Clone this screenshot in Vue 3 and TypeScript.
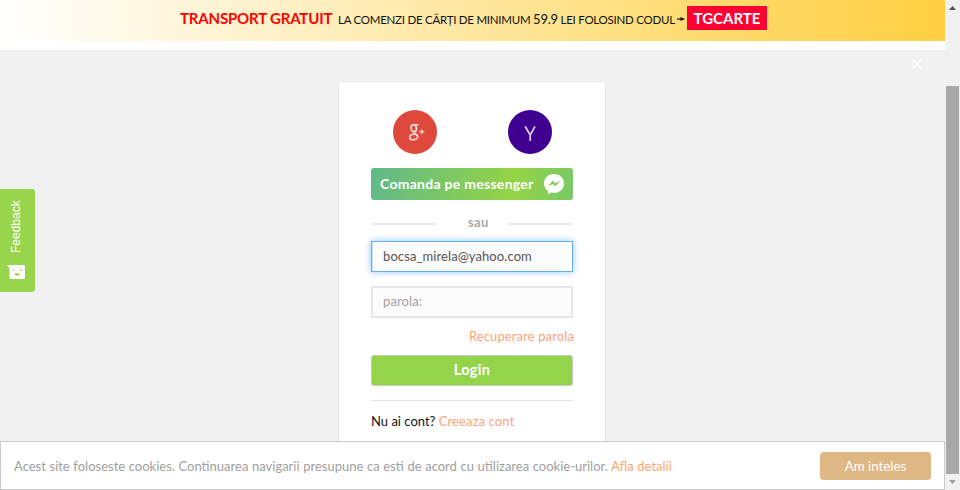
<script setup lang="ts">
import { ref } from 'vue'

const email = ref('bocsa_mirela@yahoo.com')
const password = ref('')
</script>

<template>
  <div class="window">
    <div class="page">
      <header class="promo">
        <strong class="promo-title">TRANSPORT GRATUIT</strong>
        <span class="promo-text">LA COMENZI DE CĂRȚI DE MINIMUM <span class="price">59.9</span> LEI FOLOSIND CODUL</span>
        <svg class="arrow" viewBox="0 0 8 8"><path d="M0 4H5" stroke="#111" stroke-width="1.2" /><path d="M3.500 2L8 4L3.500 6Z" fill="#111" /></svg>
        <span class="code"><span>TGCARTE</span></span>
      </header>

      <main class="content">
        <form class="card" @submit.prevent>
          <div class="socials">
            <a class="social google">
              <svg viewBox="0 0 44 44" fill="none" stroke="#f8dad6">
                <ellipse cx="20.700" cy="18.200" rx="2.700" ry="3.500" transform="rotate(-14 20.700 18.200)" stroke-width="1.700" />
                <path d="M20.500 14.800H25.600M22.500 21.300C19.500 22.700 21.500 23.200 23.500 24.700C24.300 25.300 24.700 26 24.600 26.800" stroke-width="1.500" />
                <ellipse cx="20.700" cy="27" rx="4" ry="2.700" transform="rotate(-8 20.700 27)" stroke-width="1.500" />
                <path d="M26.200 21.700H31.200M28.700 19.200V24.200" stroke-width="1.300" />
              </svg>
            </a>
            <a class="social yahoo">
              <svg viewBox="0 0 44 44" fill="none" stroke="#ddd0ee" stroke-width="1.700">
                <path d="M17.600 17.200L22.200 25L26.600 17.200M22.200 24.500V31M16.800 17.200H18.500M25.700 17.200H27.400" />
              </svg>
            </a>
          </div>

          <button class="messenger" type="button">
            <span>Comanda pe messenger</span>
            <svg viewBox="0 0 20 20">
              <path d="M10 0C4.300 0 0 4 0 9.300C0 12.500 1.500 15.200 4 17L4.100 20L7 18.400C8 18.700 9 18.800 10 18.800C15.800 18.800 20 14.700 20 9.400C20 4 15.700 0 10 0Z" fill="#fff" />
              <path d="M3.900 12.300L8.700 6.800L11.400 9.200L16.200 6.800L11.600 12.200L8.700 9.900Z" fill="#83ca60" />
            </svg>
          </button>

          <div class="divider"><i></i><span>sau</span><i></i></div>

          <input v-model="email" class="field active" type="text" />
          <input v-model="password" class="field" type="password" placeholder="parola:" />
          <a class="recover"><span>Recuperare parola</span></a>
          <button class="login" type="submit">Login</button>
          <p class="signup"><span>Nu ai cont?</span> <a>Creeaza cont</a></p>
        </form>
      </main>

      <svg class="close" viewBox="0 0 10 10"><path d="M.5 .5L9.500 9.500M9.500 .5L.5 9.500" stroke="#fff" stroke-width="1.500" /></svg>

      <aside class="feedback">
        <span>Feedback</span>
        <svg viewBox="0 0 18 14">
          <path d="M0 0H16.500Q18 0 18 1.500V12.500Q18 14 16.500 14H4Q2.500 14 2.500 12.500V3.500Z" fill="#fff" />
          <path d="M6 4.500H7.500V6H6ZM13 4.500H14.500V6H13ZM7.500 8.200H13Q12.500 10.800 10.300 10.800Q8 10.800 7.500 8.200Z" fill="#98d54c" />
        </svg>
      </aside>

      <footer class="cookies">
        <p><span>Acest site foloseste cookies. Continuarea navigarii presupune ca esti de acord cu utilizarea cookie-urilor.</span> <a>Afla detalii</a></p>
        <button type="button">Am inteles</button>
      </footer>
    </div>

    <div class="scrollbar">
      <svg viewBox="0 0 7 4"><path d="M0 4L3.500 0L7 4Z" fill="#505050" /></svg>
      <div class="thumb"></div>
      <svg viewBox="0 0 7 4"><path d="M0 0H7L3.500 4Z" fill="#a0a0a0" /></svg>
    </div>
  </div>
</template>

<style>
body {
  overflow: hidden;
}
</style>

<style scoped>
* {
  box-sizing: border-box;
}
.window {
  display: grid;
  grid-template-columns: 945px 15px;
  height: 490px;
  font-family: Lato, "Open Sans", sans-serif;
  white-space: nowrap;
}
.page {
  position: relative;
  display: flex;
  flex-direction: column;
  height: 490px;
  overflow: hidden;
  background: #fff;
}
.promo {
  display: flex;
  align-items: center;
  height: 41px;
  padding: 0 0 5px 180px;
  background: linear-gradient(90deg, #fff 0%, #ffcf40 100%);
  color: #111;
}
.promo-title {
  width: 158px;
  color: #f00;
  font-size: 15px;
  letter-spacing: -0.18px;
}
.promo-text {
  width: 339px;
  padding-top: 1px;
  font-size: 11.5px;
  letter-spacing: -0.25px;
}
.price {
  font-size: 13px;
}
.arrow {
  width: 8px;
  height: 8px;
  margin-top: 1px;
}
.code {
  display: flex;
  align-items: center;
  justify-content: center;
  width: 80px;
  height: 24px;
  margin-left: 2px;
  background: #ff0032;
  color: #fff;
  font-size: 15px;
  font-weight: 700;
}
.content {
  flex: 1;
  margin-top: 9px;
  padding-top: 31px;
  background: #f1f1f1;
}
.card {
  display: flex;
  flex-direction: column;
  width: 268px;
  height: 400px;
  margin-left: 338px;
  padding: 28px 32px 0;
  border: 1px solid #e7e7e7;
  border-radius: 3px;
  background: #fff;
}
.socials {
  display: flex;
  gap: 71px;
  padding-left: 22px;
}
.social {
  width: 44px;
  height: 44px;
  border-radius: 50%;
}
.social svg {
  display: block;
}
.google {
  background: #de493c;
}
.yahoo {
  background: #400090;
}
button {
  border: 0;
  font-family: inherit;
}
.messenger {
  display: flex;
  align-items: center;
  justify-content: space-between;
  width: 202px;
  height: 32px;
  margin-top: 14px;
  padding: 0 9px;
  border-radius: 3px;
  background: linear-gradient(100deg, #60b98a 0%, #94d445 70%, #7ac968 100%);
  color: #fff;
  font-size: 14px;
  font-weight: 700;
  letter-spacing: 0.28px;
}
.messenger span {
  padding-bottom: 1px;
}
.messenger svg {
  width: 20px;
  height: 20px;
}
.divider {
  display: flex;
  align-items: center;
  height: 18px;
  margin-top: 14px;
  color: #a8a8a8;
  font-size: 13px;
  font-weight: 700;
}
.divider span {
  flex: 1;
  padding: 0 0 2px 32px;
  letter-spacing: 0.4px;
}
.divider i {
  width: 65px;
  height: 2px;
  margin-top: 1px;
  background: #eaeaea;
}
.field {
  width: 202px;
  height: 32px;
  margin: 14px 0 0;
  padding: 0 10px 2px;
  border: 2px solid #e8e8e8;
  outline: 0;
  background: #fcfcfc;
  color: #555;
  font-family: inherit;
  font-size: 13px;
  letter-spacing: 0.1px;
}
.field::placeholder {
  color: #a0a0a0;
}
.active {
  height: 31px;
  margin-top: 9px;
  border: 1px solid #68afe9;
  padding: 0 11px 1px;
  box-shadow: 0 0 7px #8bc7fa, inset 1px 0 #c9e3f8;
}
.recover {
  display: block;
  height: 18px;
  margin-top: 9px;
  margin-right: -1px;
  color: #ffa477;
  font-size: 13px;
  line-height: 18px;
  letter-spacing: 0.12px;
  text-align: right;
}
.login {
  width: 202px;
  height: 31px;
  margin-top: 10px;
  padding: 0 0 2px;
  border: 1px solid #c5c9c0;
  border-radius: 3px;
  background: #94d44a;
  color: #fff;
  font-size: 14.5px;
  font-weight: 700;
  letter-spacing: 0.3px;
}
.signup {
  margin: 14px 0 0;
  padding-top: 11px;
  border-top: 1px solid #e3e3e3;
  color: #111;
  font-size: 13px;
  line-height: 18px;
}
.signup a {
  color: #ffa477;
  letter-spacing: 0.12px;
}
.close {
  position: absolute;
  top: 59px;
  left: 912px;
  width: 10px;
  height: 10px;
}
.feedback {
  position: absolute;
  top: 189px;
  left: 0;
  display: flex;
  flex-direction: column;
  align-items: center;
  width: 35px;
  height: 103px;
  padding-top: 11px;
  border-radius: 0 3px 3px 0;
  background: #98d54c;
  color: #fff;
  font-family: "Liberation Sans", sans-serif;
  font-size: 12px;
}
.feedback span {
  height: 53px;
  margin-right: 3px;
  line-height: 14px;
  writing-mode: vertical-rl;
  transform: rotate(180deg);
}
.feedback svg {
  width: 18px;
  height: 14px;
  margin-top: 12px;
  margin-right: 3px;
}
.cookies {
  position: absolute;
  right: 0;
  bottom: 0;
  left: 0;
  display: flex;
  align-items: center;
  justify-content: space-between;
  height: 49px;
  padding: 0 13px;
  border: 1px solid #cacaca;
  background: #fff;
  color: #a0a0a0;
  font-size: 13px;
}
.cookies p {
  margin: 0;
  word-spacing: 0.3px;
}
.cookies a {
  color: #ffa472;
}
.cookies button {
  width: 111px;
  height: 28px;
  border-radius: 4px;
  background: #dfb784;
  color: #fff;
  font-size: 13.3px;
}
.scrollbar {
  display: flex;
  flex-direction: column;
  align-items: center;
  justify-content: space-between;
  padding: 6px 0;
  background: #f1f1f1;
}
.scrollbar svg {
  width: 7px;
  height: 4px;
}
.thumb {
  width: 13px;
  height: 388px;
  margin-top: 70px;
  background: #a8a8a8;
}
</style>
